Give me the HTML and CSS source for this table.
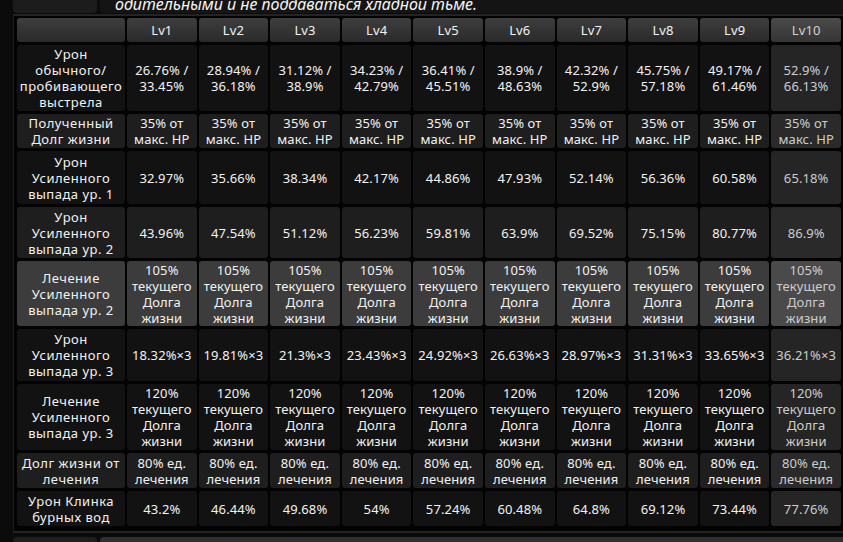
FILE: index.html
```html
<!DOCTYPE html>
<html lang="ru">
<head>
<meta charset="utf-8">
<link rel="stylesheet" href="styles.css">
</head>
<body>
<div class="strip strip-top">
  <div class="tab"></div>
  <div class="quote"><span>одительными и не поддаваться хладной тьме.</span></div>
</div>
<div class="panel">
  <div class="grid">
    <div class="c head"></div>
    <div class="c head">Lv1</div><div class="c head">Lv2</div><div class="c head">Lv3</div><div class="c head">Lv4</div><div class="c head">Lv5</div><div class="c head">Lv6</div><div class="c head">Lv7</div><div class="c head">Lv8</div><div class="c head">Lv9</div><div class="c head last">Lv10</div>

    <div class="c dark label">Урон обычного/ пробивающего выстрела</div>
    <div class="c dark">26.76% / 33.45%</div><div class="c dark">28.94% / 36.18%</div><div class="c dark">31.12% / 38.9%</div><div class="c dark">34.23% / 42.79%</div><div class="c dark">36.41% / 45.51%</div><div class="c dark">38.9% / 48.63%</div><div class="c dark">42.32% / 52.9%</div><div class="c dark">45.75% / 57.18%</div><div class="c dark">49.17% / 61.46%</div><div class="c dark last">52.9% / 66.13%</div>

    <div class="c mid label">Полученный Долг жизни</div>
    <div class="c mid">35% от макс. HP</div><div class="c mid">35% от макс. HP</div><div class="c mid">35% от макс. HP</div><div class="c mid">35% от макс. HP</div><div class="c mid">35% от макс. HP</div><div class="c mid">35% от макс. HP</div><div class="c mid">35% от макс. HP</div><div class="c mid">35% от макс. HP</div><div class="c mid">35% от макс. HP</div><div class="c mid last">35% от макс. HP</div>

    <div class="c dark label">Урон Усиленного выпада ур. 1</div>
    <div class="c dark">32.97%</div><div class="c dark">35.66%</div><div class="c dark">38.34%</div><div class="c dark">42.17%</div><div class="c dark">44.86%</div><div class="c dark">47.93%</div><div class="c dark">52.14%</div><div class="c dark">56.36%</div><div class="c dark">60.58%</div><div class="c dark last">65.18%</div>

    <div class="c mid label">Урон Усиленного выпада ур. 2</div>
    <div class="c mid">43.96%</div><div class="c mid">47.54%</div><div class="c mid">51.12%</div><div class="c mid">56.23%</div><div class="c mid">59.81%</div><div class="c mid">63.9%</div><div class="c mid">69.52%</div><div class="c mid">75.15%</div><div class="c mid">80.77%</div><div class="c mid last">86.9%</div>

    <div class="c hl label">Лечение Усиленного выпада ур. 2</div>
    <div class="c hl">105% текущего Долга жизни</div><div class="c hl">105% текущего Долга жизни</div><div class="c hl">105% текущего Долга жизни</div><div class="c hl">105% текущего Долга жизни</div><div class="c hl">105% текущего Долга жизни</div><div class="c hl">105% текущего Долга жизни</div><div class="c hl">105% текущего Долга жизни</div><div class="c hl">105% текущего Долга жизни</div><div class="c hl">105% текущего Долга жизни</div><div class="c hl last">105% текущего Долга жизни</div>

    <div class="c dark label">Урон Усиленного выпада ур. 3</div>
    <div class="c dark">18.32%×3</div><div class="c dark">19.81%×3</div><div class="c dark">21.3%×3</div><div class="c dark">23.43%×3</div><div class="c dark">24.92%×3</div><div class="c dark">26.63%×3</div><div class="c dark">28.97%×3</div><div class="c dark">31.31%×3</div><div class="c dark">33.65%×3</div><div class="c dark last">36.21%×3</div>

    <div class="c dark label">Лечение Усиленного выпада ур. 3</div>
    <div class="c dark">120% текущего Долга жизни</div><div class="c dark">120% текущего Долга жизни</div><div class="c dark">120% текущего Долга жизни</div><div class="c dark">120% текущего Долга жизни</div><div class="c dark">120% текущего Долга жизни</div><div class="c dark">120% текущего Долга жизни</div><div class="c dark">120% текущего Долга жизни</div><div class="c dark">120% текущего Долга жизни</div><div class="c dark">120% текущего Долга жизни</div><div class="c dark last">120% текущего Долга жизни</div>

    <div class="c mid label">Долг жизни от лечения</div>
    <div class="c mid">80% ед. лечения</div><div class="c mid">80% ед. лечения</div><div class="c mid">80% ед. лечения</div><div class="c mid">80% ед. лечения</div><div class="c mid">80% ед. лечения</div><div class="c mid">80% ед. лечения</div><div class="c mid">80% ед. лечения</div><div class="c mid">80% ед. лечения</div><div class="c mid">80% ед. лечения</div><div class="c mid last">80% ед. лечения</div>

    <div class="c dark label">Урон Клинка бурных вод</div>
    <div class="c dark">43.2%</div><div class="c dark">46.44%</div><div class="c dark">49.68%</div><div class="c dark">54%</div><div class="c dark">57.24%</div><div class="c dark">60.48%</div><div class="c dark">64.8%</div><div class="c dark">69.12%</div><div class="c dark">73.44%</div><div class="c dark last">77.76%</div>
  </div>
</div>
<div class="strip strip-bottom">
  <div class="tab"></div>
  <div class="wide"></div>
</div>
</body>
</html>
```
FILE: styles.css
```css
html, body {
  margin: 0;
  padding: 0;
  background: #0b0b0b;
  overflow: hidden;
}
body {
  width: 843px;
  height: 542px;
  font-family: "Noto Sans", "DejaVu Sans", sans-serif;
  color: #f2f2f2;
}
.strip {
  display: flex;
  gap: 3px;
  margin-left: 13px;
}
.strip-top {
  height: 13px;
}
.strip-top .tab {
  width: 84px;
  background: #1c1c1c;
  border-radius: 0 0 4px 4px;
}
.quote {
  flex: 1;
  background: #141414;
  border-radius: 0 0 0 4px;
  overflow: hidden;
  display: flex;
  align-items: flex-end;
  padding-left: 15px;
}
.quote span {
  font-style: italic;
  font-size: 16px;
  line-height: 16px;
  margin-bottom: 1px;
  color: #f4f4f4;
  white-space: nowrap;
}
.panel {
  margin: 1px 0 0 13px;
  border-top: 2px solid #242424;
  border-bottom: 2px solid #242424;
  border-left: 1px solid #1d1d1d;
  background: #030303;
  padding: 2px 0 4px 3px;
  height: 519px;
  box-sizing: border-box;
}
.grid {
  display: grid;
  grid-template-columns: 108px repeat(10, 1fr);
  grid-template-rows: 24px 66px 34px 53px 51px 65px 52px 66px 35px 35px;
  width: 824px;
  gap: 3px 2px;
}
.c {
  display: flex;
  align-items: center;
  justify-content: center;
  text-align: center;
  font-size: 13px;
  line-height: 16px;
  letter-spacing: 0.1px;
  padding: 0 1px;
  border-radius: 3px;
}
.c.label {
  letter-spacing: 0.5px;
}
.head {
  background: linear-gradient(#3e3e3e, #2a2a2a);
}
.head.last {
  background: linear-gradient(#4a4a4a, #353535);
  color: #d2d2d2;
}
.dark { background: #121212; }
.dark.last { background: #252525; color: #cdcdcd; }
.mid { background: #1e1e1e; }
.mid.last { background: #2a2a2a; color: #cdcdcd; }
.hl { background: #3c3c3c; }
.hl.last { background: #4a4a4a; color: #cdcdcd; }
.strip-bottom {
  margin-top: 4px;
  height: 10px;
}
.strip-bottom .tab {
  width: 84px;
  background: #1e1e1e;
  border-radius: 4px 4px 0 0;
}
.wide {
  flex: 1;
  background: #303030;
  border-radius: 4px 0 0 0;
}
```
